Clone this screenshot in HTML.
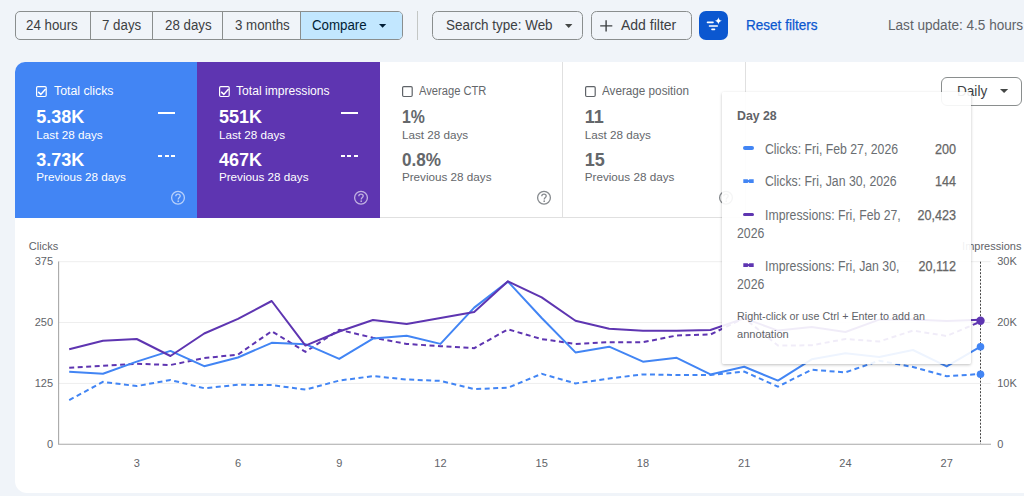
<!DOCTYPE html>
<html><head><meta charset="utf-8">
<style>
*{box-sizing:border-box;margin:0;padding:0}
html,body{width:1024px;height:496px;overflow:hidden;background:#f0f4f9;font-family:"Liberation Sans",sans-serif;position:relative}
.a{position:absolute;white-space:nowrap}
.seg{position:absolute;left:15px;top:11px;width:388px;height:29px;border:1px solid #8a8e8e;border-radius:5px;overflow:hidden;display:flex}
.seg div{height:100%;border-left:1px solid #8a8e8e}
.seg div:first-child{border-left:none}
.btn{position:absolute;top:11px;height:29px;border:1px solid #8a8e8e;border-radius:5.5px}
</style></head><body>
<div class="seg">
 <div style="width:74px"></div>
 <div style="width:62px"></div>
 <div style="width:70px"></div>
 <div style="width:78px"></div>
 <div style="flex:1;background:#c2e7ff"></div>
</div>
<div class="a" style="left:26.40px;top:17.95px;font-size:14px;line-height:14px;color:#3c4043;font-weight:normal;transform:scaleX(0.95);transform-origin:0 0;">24 hours</div>
<div class="a" style="left:102.00px;top:17.95px;font-size:14px;line-height:14px;color:#3c4043;font-weight:normal;transform:scaleX(0.95);transform-origin:0 0;">7 days</div>
<div class="a" style="left:164.50px;top:17.95px;font-size:14px;line-height:14px;color:#3c4043;font-weight:normal;transform:scaleX(0.95);transform-origin:0 0;">28 days</div>
<div class="a" style="left:234.50px;top:17.95px;font-size:14px;line-height:14px;color:#3c4043;font-weight:normal;transform:scaleX(0.95);transform-origin:0 0;">3 months</div>
<div class="a" style="left:312.00px;top:17.95px;font-size:14px;line-height:14px;color:#001d35;font-weight:normal;transform:scaleX(0.95);transform-origin:0 0;">Compare</div>
<svg class="a" style="left:379px;top:23.8px" width="8" height="5"><path d="M0 0H7.2L3.6 3.8Z" fill="#001d35"/></svg>
<div class="a" style="left:417px;top:11px;width:1px;height:29px;background:#c4c7c5"></div>
<div class="btn" style="left:432px;width:151px"></div>
<div class="a" style="left:446.20px;top:17.95px;font-size:14px;line-height:14px;color:#3c4043;font-weight:normal;transform:scaleX(0.96);transform-origin:0 0;">Search type: Web</div>
<svg class="a" style="left:564.5px;top:23.6px" width="8" height="5"><path d="M0 0H7.4L3.7 3.9Z" fill="#444746"/></svg>
<div class="btn" style="left:590.5px;width:101px"></div>
<svg class="a" style="left:599.5px;top:19.5px" width="13" height="12"><path d="M6.1 0.2V11.4M0.2 5.9H12.3" stroke="#3c4043" stroke-width="1.4"/></svg>
<div class="a" style="left:621.00px;top:17.95px;font-size:14px;line-height:14px;color:#3c4043;font-weight:normal;">Add filter</div>
<div class="a" style="left:699px;top:11px;width:29px;height:29px;border-radius:7px;background:#0b57d0"></div>
<svg class="a" style="left:699px;top:11px" width="29" height="29">
 <path d="M8.5 11.4H14M10.5 15H18.3M13 18.4H15.5" stroke="#fff" stroke-width="1.6" stroke-linecap="round"/>
 <path d="M19.4 6.2Q19.9 9.3 23 9.8Q19.9 10.3 19.4 13.4Q18.9 10.3 15.8 9.8Q18.9 9.3 19.4 6.2Z" fill="#fff"/>
</svg>
<div class="a" style="left:746.00px;top:18.15px;font-size:14px;line-height:14px;color:#0b57d0;font-weight:normal;transform:scaleX(0.967);transform-origin:0 0;-webkit-text-stroke:0.25px #0b57d0;">Reset filters</div>
<div class="a" style="left:887.90px;top:18.15px;font-size:14px;line-height:14px;color:#5f6368;font-weight:normal;transform:scaleX(0.97);transform-origin:0 0;">Last update: 4.5 hours</div>
<div class="a" style="left:15px;top:62px;width:1024px;height:156px;background:#fff;border-radius:10px 0 0 0;overflow:hidden">
 <div class="a" style="left:0;top:0;width:182px;height:156px;background:#4285f4"></div>
 <div class="a" style="left:182px;top:0;width:183px;height:156px;background:#5e35b1"></div>
 <div class="a" style="left:547px;top:0;width:1px;height:156px;background:#e0e0e0"></div>
 <div class="a" style="left:730px;top:0;width:1px;height:156px;background:#e0e0e0"></div>
 <div class="a" style="left:365px;top:155px;width:366px;height:1px;background:#e0e0e0"></div>
</div>
<svg class="a" style="left:36.2px;top:85.6px" width="12" height="12"><rect x="0.6" y="0.6" width="9.6" height="9.9" rx="1.2" fill="none" stroke="#fff" stroke-width="1.2"/><path d="M2.2 5.9L4.8 8.4L9.6 2.9" fill="none" stroke="#fff" stroke-width="1.5"/></svg>
<div class="a" style="left:53.60px;top:85.14px;font-size:12px;line-height:12px;color:#fff;font-weight:normal;transform:scaleX(1.025);transform-origin:0 0;">Total clicks</div>
<div class="a" style="left:36.30px;top:108.26px;font-size:18px;line-height:18px;color:#fff;font-weight:bold;">5.38K</div>
<div class="a" style="left:36.30px;top:128.60px;font-size:11.7px;line-height:11.7px;color:#fff;font-weight:normal;">Last 28 days</div>
<div class="a" style="left:36.30px;top:150.86px;font-size:18px;line-height:18px;color:#fff;font-weight:bold;">3.73K</div>
<div class="a" style="left:36.30px;top:170.90px;font-size:11.7px;line-height:11.7px;color:#fff;font-weight:normal;">Previous 28 days</div>
<svg class="a" style="left:170.0px;top:190px" width="16" height="16"><circle cx="8" cy="7.8" r="6.4" fill="none" stroke="rgba(255,255,255,0.62)" stroke-width="1.3"/><path d="M5.8 6.2C5.8 4.9 6.8 4.2 8 4.2C9.3 4.2 10.2 5 10.2 6.1C10.2 7.5 8.3 7.7 8.2 9.5" fill="none" stroke="rgba(255,255,255,0.62)" stroke-width="1.3"/><circle cx="8.2" cy="11.2" r="0.85" fill="rgba(255,255,255,0.62)"/></svg>
<div class="a" style="left:158.0px;top:112px;width:17px;height:2px;background:#fff"></div>
<div class="a" style="left:158.0px;top:155px;width:4px;height:2px;background:#fff"></div>
<div class="a" style="left:164.5px;top:155px;width:4px;height:2px;background:#fff"></div>
<div class="a" style="left:171.0px;top:155px;width:4px;height:2px;background:#fff"></div>
<svg class="a" style="left:218.8px;top:85.6px" width="12" height="12"><rect x="0.6" y="0.6" width="9.6" height="9.9" rx="1.2" fill="none" stroke="#fff" stroke-width="1.2"/><path d="M2.2 5.9L4.8 8.4L9.6 2.9" fill="none" stroke="#fff" stroke-width="1.5"/></svg>
<div class="a" style="left:236.20px;top:85.14px;font-size:12px;line-height:12px;color:#fff;font-weight:normal;transform:scaleX(1.01);transform-origin:0 0;">Total impressions</div>
<div class="a" style="left:218.90px;top:108.26px;font-size:18px;line-height:18px;color:#fff;font-weight:bold;">551K</div>
<div class="a" style="left:218.90px;top:128.60px;font-size:11.7px;line-height:11.7px;color:#fff;font-weight:normal;">Last 28 days</div>
<div class="a" style="left:218.90px;top:150.86px;font-size:18px;line-height:18px;color:#fff;font-weight:bold;">467K</div>
<div class="a" style="left:218.90px;top:170.90px;font-size:11.7px;line-height:11.7px;color:#fff;font-weight:normal;">Previous 28 days</div>
<svg class="a" style="left:352.6px;top:190px" width="16" height="16"><circle cx="8" cy="7.8" r="6.4" fill="none" stroke="rgba(255,255,255,0.62)" stroke-width="1.3"/><path d="M5.8 6.2C5.8 4.9 6.8 4.2 8 4.2C9.3 4.2 10.2 5 10.2 6.1C10.2 7.5 8.3 7.7 8.2 9.5" fill="none" stroke="rgba(255,255,255,0.62)" stroke-width="1.3"/><circle cx="8.2" cy="11.2" r="0.85" fill="rgba(255,255,255,0.62)"/></svg>
<div class="a" style="left:340.6px;top:112px;width:17px;height:2px;background:#fff"></div>
<div class="a" style="left:340.6px;top:155px;width:4px;height:2px;background:#fff"></div>
<div class="a" style="left:347.1px;top:155px;width:4px;height:2px;background:#fff"></div>
<div class="a" style="left:353.6px;top:155px;width:4px;height:2px;background:#fff"></div>
<svg class="a" style="left:401.8px;top:85.6px" width="12" height="12"><rect x="0.6" y="0.6" width="9.6" height="9.9" rx="1.2" fill="none" stroke="#5f6368" stroke-width="1.2"/></svg>
<div class="a" style="left:419.20px;top:85.14px;font-size:12px;line-height:12px;color:#64676b;font-weight:normal;transform:scaleX(0.93);transform-origin:0 0;">Average CTR</div>
<div class="a" style="left:401.90px;top:108.26px;font-size:18px;line-height:18px;color:#64676b;font-weight:bold;transform:scaleX(0.88);transform-origin:0 0;">1%</div>
<div class="a" style="left:401.90px;top:128.60px;font-size:11.7px;line-height:11.7px;color:#64676b;font-weight:normal;">Last 28 days</div>
<div class="a" style="left:401.90px;top:150.86px;font-size:18px;line-height:18px;color:#64676b;font-weight:bold;transform:scaleX(0.95);transform-origin:0 0;">0.8%</div>
<div class="a" style="left:401.90px;top:170.90px;font-size:11.7px;line-height:11.7px;color:#64676b;font-weight:normal;">Previous 28 days</div>
<svg class="a" style="left:535.6px;top:190px" width="16" height="16"><circle cx="8" cy="7.8" r="6.4" fill="none" stroke="#868a8e" stroke-width="1.3"/><path d="M5.8 6.2C5.8 4.9 6.8 4.2 8 4.2C9.3 4.2 10.2 5 10.2 6.1C10.2 7.5 8.3 7.7 8.2 9.5" fill="none" stroke="#868a8e" stroke-width="1.3"/><circle cx="8.2" cy="11.2" r="0.85" fill="#868a8e"/></svg>
<svg class="a" style="left:584.6px;top:85.6px" width="12" height="12"><rect x="0.6" y="0.6" width="9.6" height="9.9" rx="1.2" fill="none" stroke="#5f6368" stroke-width="1.2"/></svg>
<div class="a" style="left:602.00px;top:85.14px;font-size:12px;line-height:12px;color:#64676b;font-weight:normal;transform:scaleX(0.975);transform-origin:0 0;">Average position</div>
<div class="a" style="left:584.70px;top:108.26px;font-size:18px;line-height:18px;color:#64676b;font-weight:bold;">11</div>
<div class="a" style="left:584.70px;top:128.60px;font-size:11.7px;line-height:11.7px;color:#64676b;font-weight:normal;">Last 28 days</div>
<div class="a" style="left:584.70px;top:150.86px;font-size:18px;line-height:18px;color:#64676b;font-weight:bold;">15</div>
<div class="a" style="left:584.70px;top:170.90px;font-size:11.7px;line-height:11.7px;color:#64676b;font-weight:normal;">Previous 28 days</div>
<svg class="a" style="left:718.4px;top:190px" width="16" height="16"><circle cx="8" cy="7.8" r="6.4" fill="none" stroke="#868a8e" stroke-width="1.3"/><path d="M5.8 6.2C5.8 4.9 6.8 4.2 8 4.2C9.3 4.2 10.2 5 10.2 6.1C10.2 7.5 8.3 7.7 8.2 9.5" fill="none" stroke="#868a8e" stroke-width="1.3"/><circle cx="8.2" cy="11.2" r="0.85" fill="#868a8e"/></svg>
<div class="a" style="left:15px;top:218px;width:1024px;height:275px;background:#fff;border-radius:0 0 0 12px"></div>
<svg class="a" style="left:0;top:0" width="1024" height="496">
<line x1="58.5" y1="261.7" x2="990.5" y2="261.7" stroke="#eeeeee" stroke-width="1"/>
<line x1="58.5" y1="322.5" x2="990.5" y2="322.5" stroke="#eeeeee" stroke-width="1"/>
<line x1="58.5" y1="383.4" x2="990.5" y2="383.4" stroke="#eeeeee" stroke-width="1"/>
<line x1="58.6" y1="261.5" x2="58.6" y2="444.1" stroke="#a8a8a8" stroke-width="1.1"/>
<line x1="58" y1="444.2" x2="991" y2="444.2" stroke="#a8a8a8" stroke-width="1.1"/>
<polyline points="69.20,400.10 102.95,381.90 136.70,386.10 170.45,380.00 204.20,388.20 237.95,384.80 271.70,385.10 305.45,389.60 339.20,380.60 372.95,376.10 406.70,379.50 440.45,380.90 474.20,389.10 507.95,387.70 541.70,373.80 575.45,383.40 609.20,378.50 642.95,374.40 676.70,375.00 710.45,375.00 744.20,371.60 777.95,386.60 811.70,369.70 845.45,372.40 879.20,360.70 912.95,367.00 946.70,376.30 980.45,373.90" fill="none" stroke="#4285f4" stroke-width="2" stroke-dasharray="5 3.5"/>
<polyline points="69.20,367.80 102.95,365.80 136.70,363.80 170.45,365.00 204.20,358.00 237.95,354.60 271.70,331.20 305.45,351.80 339.20,329.80 372.95,337.70 406.70,343.90 440.45,346.20 474.20,348.20 507.95,329.30 541.70,339.10 575.45,343.90 609.20,342.20 642.95,342.20 676.70,335.50 710.45,334.50 744.20,318.00 777.95,345.60 811.70,345.30 845.45,339.00 879.20,341.50 912.95,330.60 946.70,336.00 980.45,321.70" fill="none" stroke="#5e35b1" stroke-width="2" stroke-dasharray="5 3.5"/>
<polyline points="69.20,371.70 102.95,373.70 136.70,361.60 170.45,350.90 204.20,366.20 237.95,357.50 271.70,342.80 305.45,344.20 339.20,358.90 372.95,338.60 406.70,335.70 440.45,343.90 474.20,307.60 507.95,281.60 541.70,318.00 575.45,352.40 609.20,346.70 642.95,361.70 676.70,357.80 710.45,374.40 744.20,366.80 777.95,380.60 811.70,359.30 845.45,353.30 879.20,357.10 912.95,350.00 946.70,366.40 980.45,346.70" fill="none" stroke="#4285f4" stroke-width="2" stroke-linejoin="round"/>
<polyline points="69.20,349.20 102.95,340.70 136.70,339.00 170.45,356.00 204.20,333.50 237.95,318.80 271.70,301.00 305.45,345.60 339.20,331.50 372.95,320.00 406.70,323.90 440.45,318.00 474.20,312.00 507.95,281.30 541.70,297.40 575.45,320.80 609.20,328.70 642.95,330.70 676.70,330.70 710.45,330.00 744.20,318.40 777.95,330.60 811.70,327.00 845.45,332.00 879.20,319.60 912.95,319.60 946.70,321.00 980.45,319.80" fill="none" stroke="#5e35b1" stroke-width="2" stroke-linejoin="round"/>
<line x1="980.5" y1="261.7" x2="980.5" y2="444" stroke="#444" stroke-width="1" stroke-dasharray="2 1.5"/>
<circle cx="980.5" cy="320.7" r="4.2" fill="#5e35b1"/>
<circle cx="980.5" cy="346.7" r="3.8" fill="#4285f4"/>
<circle cx="980.5" cy="374.2" r="3.8" fill="#4285f4"/>
</svg>
<div class="a" style="left:28.80px;top:240.89px;font-size:11px;line-height:11px;color:#5f6368;font-weight:normal;">Clicks</div>
<div class="a" style="left:3.00px;width:50px;text-align:right;top:256.19px;font-size:11px;line-height:11px;color:#5f6368;font-weight:normal;">375</div>
<div class="a" style="left:3.00px;width:50px;text-align:right;top:316.99px;font-size:11px;line-height:11px;color:#5f6368;font-weight:normal;">250</div>
<div class="a" style="left:3.00px;width:50px;text-align:right;top:377.89px;font-size:11px;line-height:11px;color:#5f6368;font-weight:normal;">125</div>
<div class="a" style="left:3.00px;width:50px;text-align:right;top:439.09px;font-size:11px;line-height:11px;color:#5f6368;font-weight:normal;">0</div>
<div class="a" style="left:997.20px;top:256.19px;font-size:11px;line-height:11px;color:#5f6368;font-weight:normal;">30K</div>
<div class="a" style="left:997.20px;top:316.99px;font-size:11px;line-height:11px;color:#5f6368;font-weight:normal;">20K</div>
<div class="a" style="left:997.20px;top:377.89px;font-size:11px;line-height:11px;color:#5f6368;font-weight:normal;">10K</div>
<div class="a" style="left:997.20px;top:439.09px;font-size:11px;line-height:11px;color:#5f6368;font-weight:normal;">0</div>
<div class="a" style="left:921.40px;width:100px;text-align:right;top:240.89px;font-size:11px;line-height:11px;color:#5f6368;font-weight:normal;">Impressions</div>
<div class="a" style="left:116.70px;width:40px;text-align:center;top:457.69px;font-size:11px;line-height:11px;color:#5f6368">3</div>
<div class="a" style="left:217.95px;width:40px;text-align:center;top:457.69px;font-size:11px;line-height:11px;color:#5f6368">6</div>
<div class="a" style="left:319.20px;width:40px;text-align:center;top:457.69px;font-size:11px;line-height:11px;color:#5f6368">9</div>
<div class="a" style="left:420.45px;width:40px;text-align:center;top:457.69px;font-size:11px;line-height:11px;color:#5f6368">12</div>
<div class="a" style="left:521.70px;width:40px;text-align:center;top:457.69px;font-size:11px;line-height:11px;color:#5f6368">15</div>
<div class="a" style="left:622.95px;width:40px;text-align:center;top:457.69px;font-size:11px;line-height:11px;color:#5f6368">18</div>
<div class="a" style="left:724.20px;width:40px;text-align:center;top:457.69px;font-size:11px;line-height:11px;color:#5f6368">21</div>
<div class="a" style="left:825.45px;width:40px;text-align:center;top:457.69px;font-size:11px;line-height:11px;color:#5f6368">24</div>
<div class="a" style="left:926.70px;width:40px;text-align:center;top:457.69px;font-size:11px;line-height:11px;color:#5f6368">27</div>
<div class="a" style="left:941px;top:77px;width:81px;height:29px;border:1px solid #8a8e8e;border-radius:6px"></div>
<div class="a" style="left:956.50px;top:83.85px;font-size:14px;line-height:14px;color:#3c4043;font-weight:normal;transform:scaleX(0.97);transform-origin:0 0;">Daily</div>
<svg class="a" style="left:1000.2px;top:89.3px" width="9" height="5"><path d="M0 0H8.2L4.1 4.1Z" fill="#444746"/></svg>
<div class="a" style="left:722px;top:91.5px;width:249px;height:272px;background:rgba(255,255,255,0.91);border-radius:2px;box-shadow:0 1px 3px rgba(0,0,0,0.25)"></div>
<div class="a" style="left:737.10px;top:109.00px;font-size:13.7px;line-height:13.7px;color:#5f6368;font-weight:bold;transform:scaleX(0.9);transform-origin:0 0;">Day 28</div>
<div class="a" style="left:743.1px;top:146.1px;width:10.5px;height:3.9px;background:#4285f4;border-radius:2px"></div>
<div class="a" style="left:764.70px;top:141.65px;font-size:14px;line-height:14px;color:#6a6e72;font-weight:normal;transform:scaleX(0.877);transform-origin:0 0;">Clicks: Fri, Feb 27, 2026</div>
<div class="a" style="left:876.00px;width:80px;text-align:right;top:141.65px;font-size:14px;line-height:14px;color:#666666;font-weight:normal;transform:scaleX(0.9);transform-origin:100% 0;-webkit-text-stroke:0.25px #666666;">200</div>
<svg class="a" style="left:743px;top:179.1px" width="12" height="5"><path d="M0.3 0.3H4.6L5.5 1.3L6.4 0.3H10.7V3.9H6.4L5.5 2.9L4.6 3.9H0.3Z" fill="#4285f4"/></svg>
<div class="a" style="left:764.70px;top:174.25px;font-size:14px;line-height:14px;color:#6a6e72;font-weight:normal;transform:scaleX(0.877);transform-origin:0 0;">Clicks: Fri, Jan 30, 2026</div>
<div class="a" style="left:876.00px;width:80px;text-align:right;top:174.25px;font-size:14px;line-height:14px;color:#666666;font-weight:normal;transform:scaleX(0.9);transform-origin:100% 0;-webkit-text-stroke:0.25px #666666;">144</div>
<div class="a" style="left:743.1px;top:212.5px;width:10.5px;height:3.9px;background:#5e35b1;border-radius:2px"></div>
<div class="a" style="left:764.70px;top:207.55px;font-size:14px;line-height:14px;color:#6a6e72;font-weight:normal;transform:scaleX(0.877);transform-origin:0 0;">Impressions: Fri, Feb 27,</div>
<div class="a" style="left:876.00px;width:80px;text-align:right;top:207.55px;font-size:14px;line-height:14px;color:#666666;font-weight:normal;transform:scaleX(0.9);transform-origin:100% 0;-webkit-text-stroke:0.25px #666666;">20,423</div>
<div class="a" style="left:737.00px;top:225.85px;font-size:14px;line-height:14px;color:#6a6e72;font-weight:normal;transform:scaleX(0.877);transform-origin:0 0;">2026</div>
<svg class="a" style="left:743px;top:263.2px" width="12" height="5"><path d="M0.3 0.3H4.6L5.5 1.3L6.4 0.3H10.7V3.9H6.4L5.5 2.9L4.6 3.9H0.3Z" fill="#5e35b1"/></svg>
<div class="a" style="left:764.70px;top:258.75px;font-size:14px;line-height:14px;color:#6a6e72;font-weight:normal;transform:scaleX(0.877);transform-origin:0 0;">Impressions: Fri, Jan 30,</div>
<div class="a" style="left:876.00px;width:80px;text-align:right;top:258.75px;font-size:14px;line-height:14px;color:#666666;font-weight:normal;transform:scaleX(0.9);transform-origin:100% 0;-webkit-text-stroke:0.25px #666666;">20,112</div>
<div class="a" style="left:737.00px;top:277.05px;font-size:14px;line-height:14px;color:#6a6e72;font-weight:normal;transform:scaleX(0.877);transform-origin:0 0;">2026</div>
<div class="a" style="left:737.00px;top:310.60px;font-size:10.75px;line-height:10.75px;color:#5f6368;font-weight:normal;">Right-click or use Ctrl + Enter to add an</div>
<div class="a" style="left:737.00px;top:329.30px;font-size:10.75px;line-height:10.75px;color:#5f6368;font-weight:normal;transform:scaleX(1.03);transform-origin:0 0;">annotation</div>
</body></html>
